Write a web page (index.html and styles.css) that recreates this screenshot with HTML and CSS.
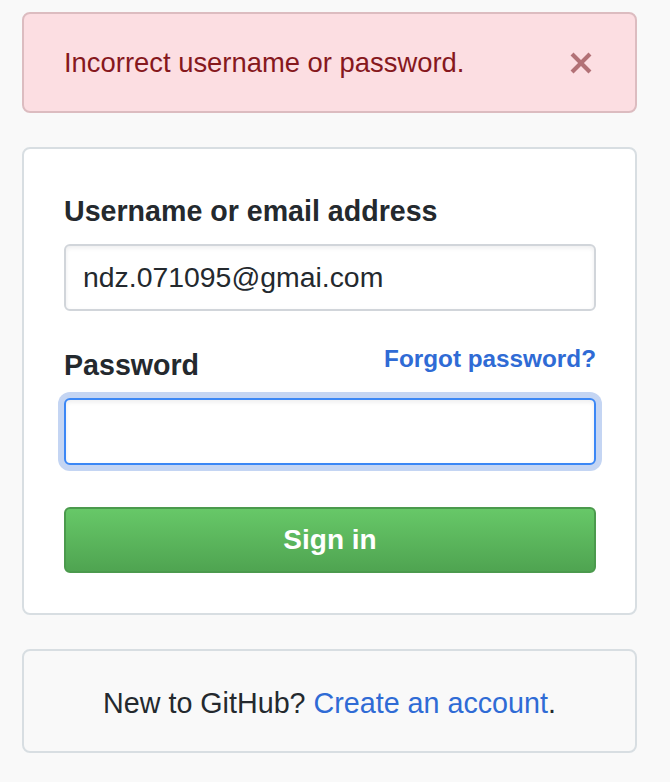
FILE: index.html
```html
<!DOCTYPE html>
<html lang="en">
<head>
<meta charset="utf-8">
<title>Sign in</title>
<link rel="stylesheet" href="styles.css">
</head>
<body>
<div class="page">
  <div class="flash">
    <span class="flash-text">Incorrect username or password.</span>
    <button class="flash-close" type="button" aria-label="Dismiss">
      <svg viewBox="0 0 12 16" width="24" height="32" aria-hidden="true"><path fill="currentColor" fill-rule="evenodd" d="M7.48 8l3.75 3.75-1.48 1.48L6 9.48l-3.750 3.75-1.48-1.48L4.52 8 .77 4.25l1.48-1.48L6 6.52l3.75-3.75 1.48 1.48L7.48 8z"/></svg>
    </button>
  </div>

  <form class="login-box">
    <label class="label" for="login">Username or email address</label>
    <input class="input" id="login" type="text" value="ndz.071095@gmai.com">

    <div class="label-row">
      <label class="label" for="password">Password</label>
      <a class="forgot" href="#">Forgot password?</a>
    </div>
    <input class="input input-focus" id="password" type="password">

    <button class="btn-signin" type="button">Sign in</button>
  </form>

  <div class="create-box">
    <p class="create-text">New to GitHub? <a class="link" href="#">Create an account</a>.</p>
  </div>
</div>
</body>
</html>
```

FILE: styles.css
```css
html, body {
  margin: 0;
  padding: 0;
  background: #f9f9f9;
}

body {
  font-family: "Liberation Sans", Arial, sans-serif;
  color: #24292e;
}

.page {
  width: 615px;
  margin: 12px 0 0 22px;
  display: flex;
  flex-direction: column;
  gap: 34px;
}

.flash {
  box-sizing: border-box;
  height: 101px;
  display: flex;
  align-items: center;
  justify-content: space-between;
  padding: 0 40px;
  background: #fcdee2;
  border: 2px solid #dcbcc0;
  border-radius: 8px;
  color: #86181d;
}

.flash-text {
  font-size: 27.4px;
  line-height: 42px;
}

.flash-close {
  display: flex;
  align-items: center;
  justify-content: center;
  margin: 0 2px 0 0;
  padding: 0;
  background: none;
  border: 0;
  color: #b27176;
}

.login-box {
  box-sizing: border-box;
  margin: 0;
  padding: 41px 39px 40px 40px;
  background: #fff;
  border: 2px solid #d8dee2;
  border-radius: 8px;
  display: flex;
  flex-direction: column;
}

.label {
  display: block;
  font-size: 28.6px;
  line-height: 42px;
  font-weight: bold;
  margin-bottom: 12px;
}

.label-row {
  display: flex;
  justify-content: space-between;
  align-items: flex-start;
  margin-top: 33px;
}

.forgot {
  font-size: 24.3px;
  line-height: 42px;
  font-weight: bold;
  color: #2f6bd5;
  text-decoration: none;
  margin-top: -6px;
}

.input {
  box-sizing: border-box;
  width: 100%;
  height: 67px;
  margin: 0;
  padding: 0 17px;
  font-family: "Liberation Sans", Arial, sans-serif;
  font-size: 28.4px;
  color: #24292e;
  background: #fff;
  border: 2px solid #d1d5da;
  border-radius: 6px;
  box-shadow: inset 0 2px 4px rgba(27, 31, 35, 0.08);
  outline: none;
}

.input-focus {
  border-color: #3b87f5;
  box-shadow: inset 0 2px 4px rgba(27, 31, 35, 0.08), 0 0 0 6px #c4d5f3;
}

.btn-signin {
  box-sizing: border-box;
  width: 100%;
  height: 66px;
  margin-top: 42px;
  padding: 0;
  font-family: "Liberation Sans", Arial, sans-serif;
  font-size: 28px;
  font-weight: bold;
  color: #fff;
  background: linear-gradient(180deg, #67c868 0%, #4fa451 100%);
  border: 2px solid #4b9a4d;
  border-radius: 6px;
}

.create-box {
  box-sizing: border-box;
  height: 104px;
  padding-top: 3px;
  display: flex;
  align-items: center;
  justify-content: center;
  background: #f9f9f9;
  border: 2px solid #d8dee2;
  border-radius: 8px;
}

.create-text {
  margin: 0;
  font-size: 28.7px;
  line-height: 42px;
  color: #24292e;
}

.link {
  color: #2f6bd5;
  text-decoration: none;
}
```
